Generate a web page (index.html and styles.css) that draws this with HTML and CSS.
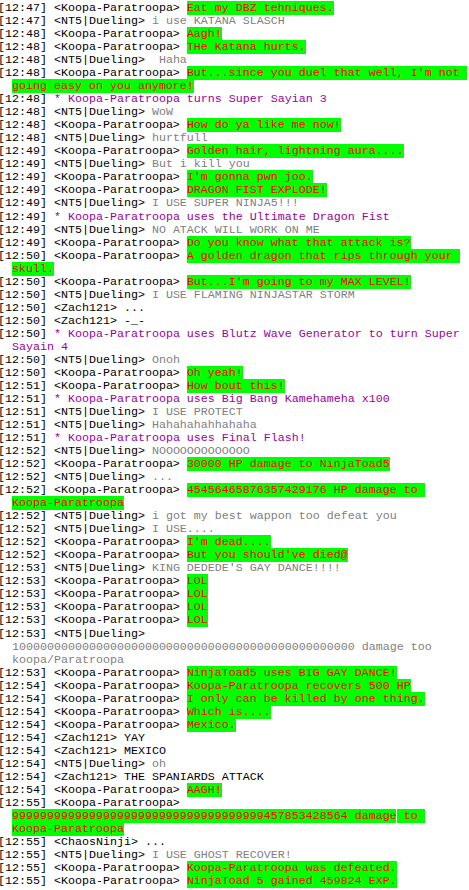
FILE: index.html
```html
<!DOCTYPE html>
<html lang="en">
<head>
    <meta charset="UTF-8">
    <meta name="viewport" content="width=device-width, initial-scale=1.0">
    <title>Chat log</title>
    <link rel="stylesheet" href="styles.css">
</head>
<body>
    <div class="log">
        <p class="line">[12:47] &lt;Koopa-Paratroopa&gt; <span class="hit">Eat my DBZ tehniques.</span></p>
        <p class="line">[12:47] &lt;NT5|Dueling&gt; <span class="ninja">i use KATANA SLASCH</span></p>
        <p class="line">[12:48] &lt;Koopa-Paratroopa&gt; <span class="hit">Aagh!</span></p>
        <p class="line">[12:48] &lt;Koopa-Paratroopa&gt; <span class="hit">THe Katana hurts.</span></p>
        <p class="line">[12:48] &lt;NT5|Dueling&gt; <span class="ninja"> Haha</span></p>
        <p class="line">[12:48] &lt;Koopa-Paratroopa&gt; <span class="hit">But...since you duel that well, I'm not going easy on you anymore!</span></p>
        <p class="line">[12:48] <span class="act">* Koopa-Paratroopa turns Super Sayian 3</span></p>
        <p class="line">[12:48] &lt;NT5|Dueling&gt; <span class="ninja">WoW</span></p>
        <p class="line">[12:48] &lt;Koopa-Paratroopa&gt; <span class="hit">How do ya like me now!</span></p>
        <p class="line">[12:48] &lt;NT5|Dueling&gt; <span class="ninja">hurtfull</span></p>
        <p class="line">[12:49] &lt;Koopa-Paratroopa&gt; <span class="hit">Golden hair, lightning aura....</span></p>
        <p class="line">[12:49] &lt;NT5|Dueling&gt; <span class="ninja">But i kill you</span></p>
        <p class="line">[12:49] &lt;Koopa-Paratroopa&gt; <span class="hit">I'm gonna pwn joo.</span></p>
        <p class="line">[12:49] &lt;Koopa-Paratroopa&gt; <span class="hit">DRAGON FIST EXPLODE!</span></p>
        <p class="line">[12:49] &lt;NT5|Dueling&gt; <span class="ninja">I USE SUPER NINJA5!!!</span></p>
        <p class="line">[12:49] <span class="act">* Koopa-Paratroopa uses the Ultimate Dragon Fist</span></p>
        <p class="line">[12:49] &lt;NT5|Dueling&gt; <span class="ninja">NO ATACK WILL WORK ON ME</span></p>
        <p class="line">[12:49] &lt;Koopa-Paratroopa&gt; <span class="hit">Do you know what that attack is?</span></p>
        <p class="line">[12:50] &lt;Koopa-Paratroopa&gt; <span class="hit">A golden dragon that rips through your skull.</span></p>
        <p class="line">[12:50] &lt;Koopa-Paratroopa&gt; <span class="hit">But...I'm going to my MAX LEVEL!</span></p>
        <p class="line">[12:50] &lt;NT5|Dueling&gt; <span class="ninja">I USE FLAMING NINJASTAR STORM</span></p>
        <p class="line">[12:50] &lt;Zach121&gt; ...</p>
        <p class="line">[12:50] &lt;Zach121&gt; -_-</p>
        <p class="line">[12:50] <span class="act">* Koopa-Paratroopa uses Blutz Wave Generator to turn Super Sayain 4</span></p>
        <p class="line">[12:50] &lt;NT5|Dueling&gt; <span class="ninja">Onoh</span></p>
        <p class="line">[12:50] &lt;Koopa-Paratroopa&gt; <span class="hit">Oh yeah!</span></p>
        <p class="line">[12:51] &lt;Koopa-Paratroopa&gt; <span class="hit">How bout this!</span></p>
        <p class="line">[12:51] <span class="act">* Koopa-Paratroopa uses Big Bang Kamehameha x100</span></p>
        <p class="line">[12:51] &lt;NT5|Dueling&gt; <span class="ninja">I USE PROTECT</span></p>
        <p class="line">[12:51] &lt;NT5|Dueling&gt; <span class="ninja">Hahahahahhahaha</span></p>
        <p class="line">[12:51] <span class="act">* Koopa-Paratroopa uses Final Flash!</span></p>
        <p class="line">[12:52] &lt;NT5|Dueling&gt; <span class="ninja">NOOOOOOOOOOOOO</span></p>
        <p class="line">[12:52] &lt;Koopa-Paratroopa&gt; <span class="hit">30000 HP damage to NinjaToad5</span></p>
        <p class="line">[12:52] &lt;NT5|Dueling&gt; <span class="ninja">...</span></p>
        <p class="line">[12:52] &lt;Koopa-Paratroopa&gt; <span class="hit">45456465876357429176 HP damage to <span class="name">Koopa-Paratroopa</span></span></p>
        <p class="line">[12:52] &lt;NT5|Dueling&gt; <span class="ninja">i got my best wappon too defeat you</span></p>
        <p class="line">[12:52] &lt;NT5|Dueling&gt; <span class="ninja">I USE....</span></p>
        <p class="line">[12:52] &lt;Koopa-Paratroopa&gt; <span class="hit">I'm dead....</span></p>
        <p class="line">[12:52] &lt;Koopa-Paratroopa&gt; <span class="hit">But you should've died@</span></p>
        <p class="line">[12:53] &lt;NT5|Dueling&gt; <span class="ninja">KING DEDEDE'S GAY DANCE!!!!</span></p>
        <p class="line">[12:53] &lt;Koopa-Paratroopa&gt; <span class="hit">LOL</span></p>
        <p class="line">[12:53] &lt;Koopa-Paratroopa&gt; <span class="hit">LOL</span></p>
        <p class="line">[12:53] &lt;Koopa-Paratroopa&gt; <span class="hit">LOL</span></p>
        <p class="line">[12:53] &lt;Koopa-Paratroopa&gt; <span class="hit">LOL</span></p>
        <p class="line">[12:53] &lt;NT5|Dueling&gt; <span class="ninja">1000000000000000000000000000000000000000000000000 damage too koopa/Paratroopa</span></p>
        <p class="line">[12:53] &lt;Koopa-Paratroopa&gt; <span class="hit">NinjaToad5 uses BIG GAY DANCE!</span></p>
        <p class="line">[12:54] &lt;Koopa-Paratroopa&gt; <span class="hit">Koopa-Paratroopa recovers 500 HP</span></p>
        <p class="line">[12:54] &lt;Koopa-Paratroopa&gt; <span class="hit">I only can be killed by one thing.</span></p>
        <p class="line">[12:54] &lt;Koopa-Paratroopa&gt; <span class="hit">Which is....</span></p>
        <p class="line">[12:54] &lt;Koopa-Paratroopa&gt; <span class="hit">Mexico.</span></p>
        <p class="line">[12:54] &lt;Zach121&gt; YAY</p>
        <p class="line">[12:54] &lt;Zach121&gt; MEXICO</p>
        <p class="line">[12:54] &lt;NT5|Dueling&gt; <span class="ninja">oh</span></p>
        <p class="line">[12:54] &lt;Zach121&gt; THE SPANIARDS ATTACK</p>
        <p class="line">[12:54] &lt;Koopa-Paratroopa&gt; <span class="hit">AAGH!</span></p>
        <p class="line">[12:55] &lt;Koopa-Paratroopa&gt; <span class="hit">999999999999999999999999999999999999457853428564 damage</span><span class="hit seam"> to </span><span class="hit name">Koopa-Paratroopa</span></p>
        <p class="line">[12:55] &lt;ChaosNinji&gt; ...</p>
        <p class="line">[12:55] &lt;NT5|Dueling&gt; <span class="ninja">I USE GHOST RECOVER!</span></p>
        <p class="line">[12:55] &lt;Koopa-Paratroopa&gt; <span class="hit">Koopa-Paratroopa was defeated.</span></p>
        <p class="line">[12:55] &lt;Koopa-Paratroopa&gt; <span class="hit">NinjaToad 5 gained 459824 EXP.</span></p>
    </div>
</body>
</html>
```

FILE: styles.css
```css
body {
    margin: 0;
    background-color: #fff;
    color: #000;
    font-family: "Liberation Mono", "Courier New", monospace;
    font-size: 11.667px;
}

.log {
    margin-left: -2px;
    padding-top: 2px;
}

.line {
    margin: 0;
    line-height: 13.03px;
    white-space: pre-wrap;
    padding-left: 2ch;
    text-indent: -2ch;
}

/* koopa talking: red on green */
.hit {
    color: #ff0000;
    background-color: #00ff00;
}

/* names with a hyphen should not break */
.name {
    white-space: nowrap;
}

/* little white gap between two green runs */
.seam {
    border-left: 1px solid #fff;
    margin-left: -1px;
}

/* ninja text is grey */
.ninja {
    color: #808080;
}

/* /me actions */
.act {
    color: #9c009c;
}
```
